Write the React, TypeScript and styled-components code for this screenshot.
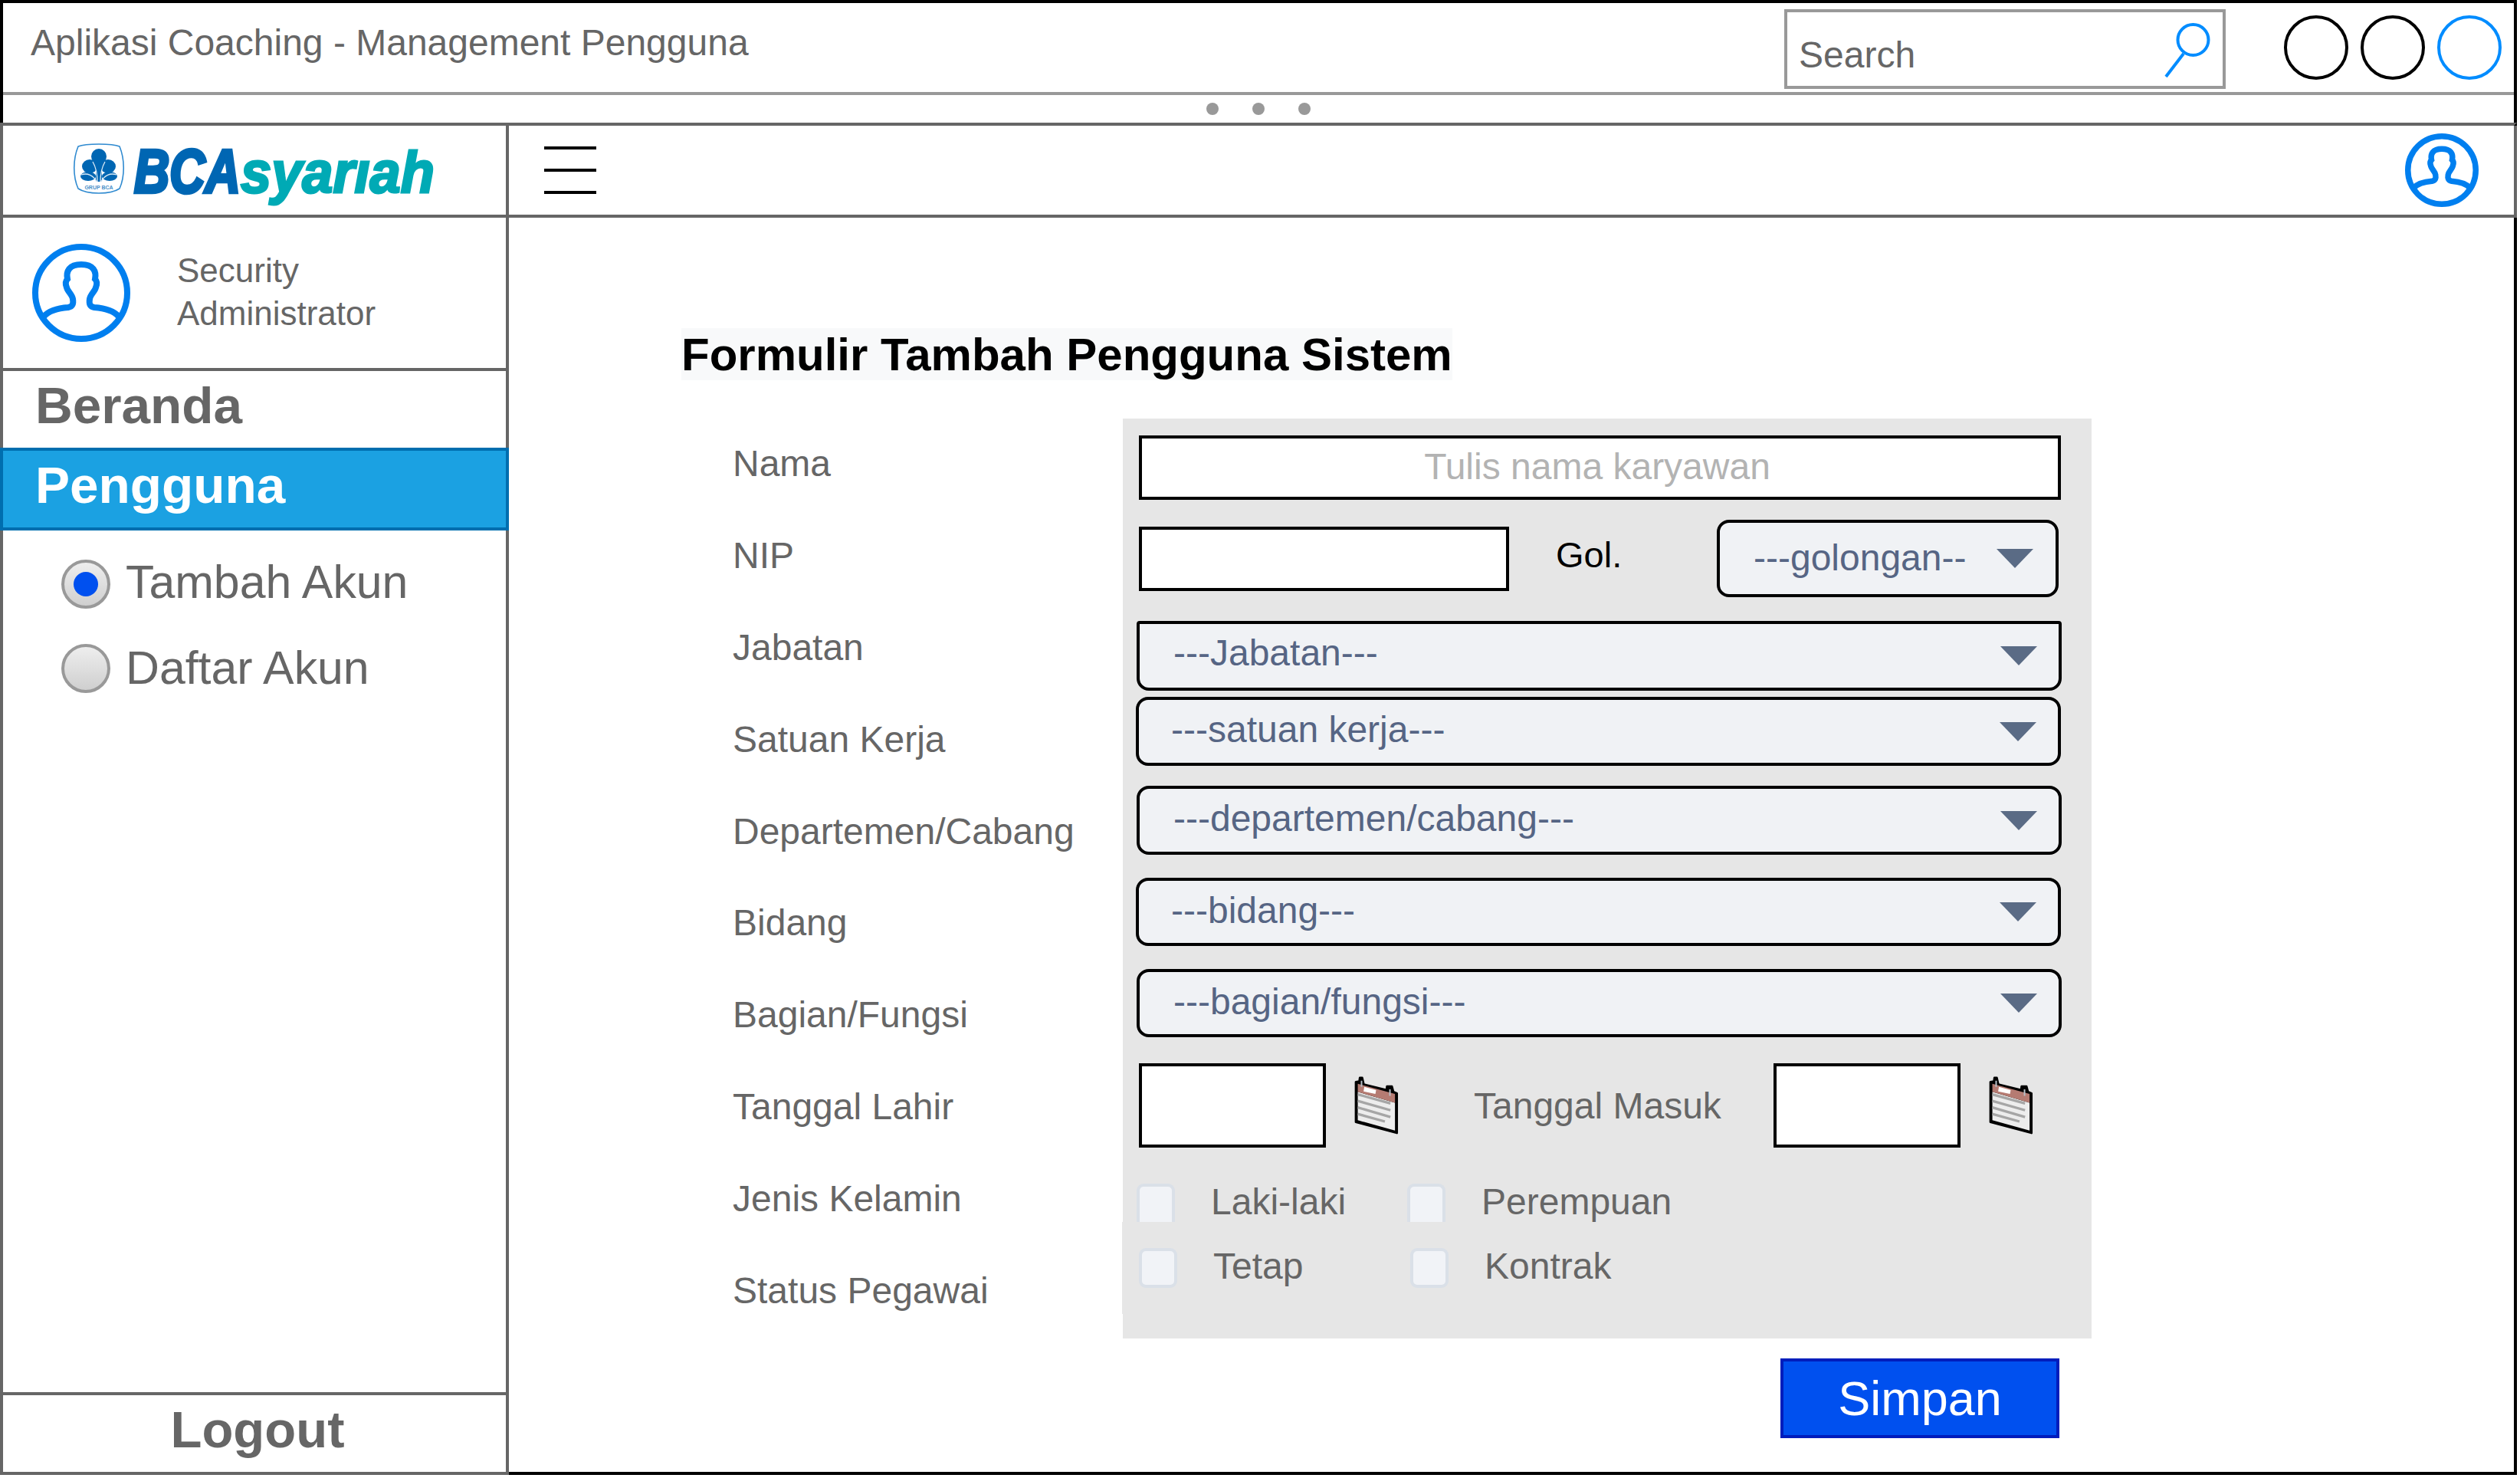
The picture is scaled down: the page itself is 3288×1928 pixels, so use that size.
import React from 'react';
import styled, { createGlobalStyle } from 'styled-components';

const Global = createGlobalStyle`
  html, body { margin: 0; padding: 0; background: #fff; }
  body { font-family: "Liberation Sans", Arial, sans-serif; color: #666; }
  * { box-sizing: border-box; }
`;

const Frame = styled.div`
  width: 3284px; height: 1924px; display: flex; flex-direction: column; background: #fff; overflow: hidden;
`;
const TitleBar = styled.header`
  height: 124px; flex: none; display: flex; align-items: flex-start;
  border-top: 4px solid #000; border-left: 4px solid #000; border-right: 4px solid #000;
  box-shadow: inset 0 -4px 0 #999;
`;
const AppTitle = styled.div`
  font-size: 48px; line-height: 56px; color: #666; margin: 24px 0 0 36px; flex: 1;
`;
const SearchBox = styled.div`
  width: 576px; height: 104px; margin: 8px 0 0 0; border: 4px solid #999; display: flex; align-items: flex-start;
  padding: 28px 0 0 15px; font-size: 48px; line-height: 56px; color: #666; position: relative;
`;
const SearchGlyph = styled.svg`
  position: absolute; left: 490px; top: 12px; width: 62px; height: 76px;
`;
const WindowButtons = styled.div`
  display: flex; gap: 16px; margin: 16px 16px 0 76px;
`;
const WindowButton = styled.span<{ $blue?: boolean }>`
  width: 84px; height: 84px; border-radius: 50%; border: 4px solid ${p => (p.$blue ? '#008CFF' : '#000')};
`;
const DotStrip = styled.div`
  height: 36px; flex: none; display: flex; justify-content: center; align-items: center; gap: 44px;
  border-left: 4px solid #000; border-right: 4px solid #000;
`;
const Dot = styled.span`
  width: 16px; height: 16px; border-radius: 50%; background: #999;
`;
const Shell = styled.div`
  flex: 1; min-height: 0; display: flex; flex-direction: column;
  border-top: 4px solid #666; border-left: 4px solid #666; border-right: 4px solid #000; border-bottom: 4px solid #000;
`;
const HeaderRow = styled.div`
  height: 120px; flex: none; display: flex; border-bottom: 4px solid #666; box-shadow: 4px 0 0 #666;
`;
const LogoCell = styled.div`
  width: 660px; flex: none; border-right: 4px solid #666; padding: 20px 0 0 88px;
`;
const LogoSvg = styled.svg`
  width: 480px; height: 92px; display: block; overflow: visible;
`;
const HeaderBar = styled.div`
  flex: 1; display: flex; align-items: center; justify-content: space-between; padding: 0 46px 0 46px;
`;
const Hamburger = styled.div`
  width: 68px; display: flex; flex-direction: column; gap: 25px;
`;
const HamburgerLine = styled.span`
  height: 4px; background: #000;
`;
const UserGlyph = styled.svg<{ $size: number }>`
  width: ${p => p.$size}px; height: ${p => p.$size}px; flex: none; display: block;
`;
const Body = styled.div`
  flex: 1; min-height: 0; display: flex;
`;
const Sidebar = styled.aside`
  width: 656px; flex: none; display: flex; flex-direction: column; box-shadow: 4px 0 0 #666;
`;
const UserBlock = styled.div`
  height: 200px; flex: none; display: flex; align-items: flex-start; border-bottom: 4px solid #666; padding: 34px 0 0 38px;
`;
const UserName = styled.div`
  margin: 7px 0 0 61px; font-size: 44px; line-height: 56px; color: #666;
`;
const NavItem = styled.div`
  height: 100px; flex: none; padding: 6px 0 0 42px; font-size: 67.5px; line-height: 78px; font-weight: 700; color: #666;
`;
const NavActive = styled.div`
  height: 108px; flex: none; margin: 0 -4px; padding: 6px 0 0 42px; background: #1BA1E2; border: 4px solid #006EAF;
  font-size: 67.5px; line-height: 78px; font-weight: 700; color: #fff;
`;
const RadioList = styled.div`
  display: flex; flex-direction: column; gap: 46px; padding: 38px 0 0 76px; flex: 1;
`;
const RadioRow = styled.div`
  display: flex; align-items: center; gap: 20px; height: 64px; font-size: 60.8px; color: #666;
`;
const RadioMark = styled.span`
  width: 64px; height: 64px; border-radius: 50%; border: 4px solid #999; display: flex; align-items: center; justify-content: center;
  background: linear-gradient(#eeeeee, #cfcfcf); flex: none;
`;
const RadioDot = styled.span`
  width: 32px; height: 32px; border-radius: 50%; background: #0050EF;
`;
const Lifted = styled.span<{ $lift: number; $nudge?: number }>`
  display: block; margin-bottom: ${p => p.$lift * 2}px; margin-right: ${p => p.$nudge ?? 0}px;
`;
const LogoutRow = styled.div`
  height: 104px; flex: none; border-top: 4px solid #666; text-align: center; padding-left: 8px;
  font-size: 67px; line-height: 90px; font-weight: 700; color: #666; box-shadow: -4px 4px 0 #666, 4px 4px 0 #666;
`;
const Content = styled.main`
  flex: 1; min-width: 0; display: flex; flex-direction: column; padding: 144px 0 0 229px;
`;
const Heading = styled.h1`
  margin: 0; align-self: flex-start; background: #F8F9FA; padding-top: 2px; font-size: 60px; line-height: 66px; font-weight: 700; color: #000;
`;
const FormSplit = styled.div`
  display: flex; margin-top: 50px; height: 1200px;
`;
const LabelColumn = styled.div`
  width: 576px; flex: none; padding: 31px 0 0 67px; display: flex; flex-direction: column;
`;
const FieldLabel = styled.div`
  height: 119.9px; flex: none; font-size: 48px; line-height: 56px; color: #666;
`;
const Panel = styled.div`
  width: 1264px; height: 1200px; background: #E6E6E6; padding: 22px 0 0 21px; display: flex; flex-direction: column; position: relative;
  &::before {
    content: ""; position: absolute; left: -1px; top: 1048px; width: 1px; height: 120px; background: #E6E6E6;
  }
`;
const TextInput = styled.div<{ $w: number; $h: number }>`
  width: ${p => p.$w}px; height: ${p => p.$h}px; flex: none; background: #fff; border: 4px solid #000;
  display: flex; align-items: center; justify-content: center; font-size: 48px; color: #B3B3B3;
`;
const InlineRow = styled.div<{ $top: number; $left?: number }>`
  display: flex; align-items: center; margin-top: ${p => p.$top}px; margin-left: ${p => p.$left ?? 0}px;
`;
const SelectBox = styled.div<{ $w: number; $h: number; $top?: number; $left?: number; $pad: number; $arrow: number }>`
  width: ${p => p.$w}px; height: ${p => p.$h}px; flex: none; margin-top: ${p => p.$top ?? 0}px; margin-left: ${p => p.$left ?? 0}px;
  background: #F0F2F5; border: 4px solid #000; border-radius: 16px; display: flex; align-items: center; justify-content: space-between;
  padding: 0 ${p => p.$arrow}px 0 ${p => p.$pad}px; font-size: 48px; color: #566584;
`;
const SelectSquareTop = styled(SelectBox)`
  border-top-left-radius: 4px; border-top-right-radius: 4px;
`;
const Caret = styled.span`
  width: 0; height: 0; border-left: 24px solid transparent; border-right: 24px solid transparent; border-top: 25px solid #5A6B85;
`;
const GolLabel = styled.div`
  font-size: 47px; color: #000; margin: -10px 0 0 61px; width: 210px; flex: none;
`;
const CalGlyph = styled.svg`
  width: 60px; height: 78px; flex: none; margin-left: 36px; display: block;
`;
const MasukLabel = styled.div`
  width: 391px; flex: none; margin-left: 97px; font-size: 48px; color: #666;
`;
const CheckItem = styled.div<{ $w: number }>`
  width: ${p => p.$w}px; flex: none; display: flex; align-items: center; gap: 47px; font-size: 48px; line-height: 40px; color: #666;
`;
const CheckBox = styled.span<{ $clipped?: boolean; $h: number }>`
  width: 50px; height: ${p => p.$h}px; flex: none; background: #F1F3F7; border: 4px solid #DAE0E8; border-radius: 9px;
  ${p => p.$clipped && 'border-bottom: none; border-bottom-left-radius: 0; border-bottom-right-radius: 0;'}
`;
const SubmitRow = styled.div`
  display: flex; margin: 26px 0 0 1434px;
`;
const SubmitButton = styled.div`
  width: 364px; height: 104px; flex: none; background: #0050EF; border: 4px solid #001DBC; color: #fff; font-size: 63px;
  display: flex; align-items: center; justify-content: center;
`;

const UserIcon = ({ size, stroke }: { size: number; stroke: number }) => (
  <UserGlyph $size={size} viewBox="0 0 128 128" fill="none" stroke="#007FEF" strokeWidth={stroke}>
    <circle cx="64" cy="64" r={64 - stroke / 2} />
    <path d="M15 95C22 87 33 84 47 83C53 82 54 78 53 72C52 66 46 62 45 57C43 52 44 48 46 46C44 36 48 27 64 27C80 27 84 36 82 46C84 48 85 52 83 57C82 62 76 66 75 72C74 78 75 82 81 83C95 84 106 87 113 95" />
  </UserGlyph>
);

const CalendarIcon = () => (
  <CalGlyph viewBox="75 68 183 236">
    <path d="M84 92L98 90L100 76L110 76L116 102L206 124L208 110L228 110L234 132L248 138L248 296L84 252Z" fill="#000" stroke="#000" strokeWidth="8" strokeLinejoin="round" />
    <path d="M92 132L240 175L240 286L92 245Z" fill="#EDEDED" />
    <path d="M92 100L240 140L240 175L92 132Z" fill="#B57B72" />
    <path d="M118 112L165 125L162 140L115 130Z" fill="#fff" />
    <path d="M92 142L222 178M92 168L222 205M92 194L222 232M92 220L200 250" stroke="#A6A6A6" strokeWidth="10" />
    <path d="M107 88V112M220 122V148" stroke="#B8C0C8" strokeWidth="6" />
  </CalGlyph>
);

const Logo = () => (
  <LogoSvg viewBox="0 0 480 92">
    <path d="M10 7C20 3 54 3 64 7C71 24 71 46 64 62C52 70 22 70 10 62C3 46 3 24 10 7Z" fill="#fff" stroke="#2F8AD0" strokeWidth="1.6" />
    <g fill="#0066B3">
      <circle cx="37" cy="20" r="10" />
      <ellipse cx="25" cy="33" rx="10" ry="9" />
      <ellipse cx="49" cy="33" rx="10" ry="9" />
      <ellipse cx="23" cy="46" rx="10" ry="6" />
      <ellipse cx="51" cy="46" rx="10" ry="6" />
      <path d="M33 26H41V53H33Z" />
    </g>
    <path d="M35 53C35 42 33 34 29 27M39 53C39 42 41 34 45 27M34 53C30 45 22 41 14 44M40 53C44 45 52 41 60 44" fill="none" stroke="#DCEBF6" strokeWidth="1.3" />
    <text x="37" y="63" fontSize="7" fontWeight="700" fill="#4A90C8" textAnchor="middle" fontFamily="Liberation Sans, sans-serif">GRUP BCA</text>
    <g transform="translate(83 67) scale(0.8 1)">
      <text fontFamily="Liberation Sans, sans-serif" fontSize="80" fontWeight="700" fontStyle="italic" fill="#0066B3" stroke="#0066B3" strokeWidth="4.5">BCA</text>
    </g>
    <g transform="translate(222 67) scale(0.95 1)">
      <text fontFamily="Liberation Sans, sans-serif" fontSize="76" fontWeight="700" fontStyle="italic" fill="#00AAB5" stroke="#00AAB5" strokeWidth="3">syarıah</text>
    </g>
  </LogoSvg>
);

const labels = ['Nama', 'NIP', 'Jabatan', 'Satuan Kerja', 'Departemen/Cabang', 'Bidang', 'Bagian/Fungsi', 'Tanggal Lahir', 'Jenis Kelamin', 'Status Pegawai'];

export default function App() {
  return (
    <Frame>
      <Global />
      <TitleBar>
        <AppTitle>Aplikasi Coaching - Management Pengguna</AppTitle>
        <SearchBox>
          Search
          <SearchGlyph viewBox="0 0 62 76" fill="none" stroke="#008CFF">
            <circle cx="39.5" cy="24" r="20" strokeWidth="4" />
            <path d="M27 42L4 72" strokeWidth="4" />
          </SearchGlyph>
        </SearchBox>
        <WindowButtons>
          <WindowButton />
          <WindowButton />
          <WindowButton $blue />
        </WindowButtons>
      </TitleBar>
      <DotStrip>
        <Dot /><Dot /><Dot />
      </DotStrip>
      <Shell>
        <HeaderRow>
          <LogoCell><Logo /></LogoCell>
          <HeaderBar>
            <Hamburger><HamburgerLine /><HamburgerLine /><HamburgerLine /></Hamburger>
            <UserIcon size={96} stroke={10} />
          </HeaderBar>
        </HeaderRow>
        <Body>
          <Sidebar>
            <UserBlock>
              <UserIcon size={128} stroke={8} />
              <UserName>Security<br />Administrator</UserName>
            </UserBlock>
            <NavItem>Beranda</NavItem>
            <NavActive>Pengguna</NavActive>
            <RadioList>
              <RadioRow><RadioMark><RadioDot /></RadioMark><Lifted $lift={3}>Tambah Akun</Lifted></RadioRow>
              <RadioRow><RadioMark /><Lifted $lift={1.5}>Daftar Akun</Lifted></RadioRow>
            </RadioList>
            <LogoutRow>Logout</LogoutRow>
          </Sidebar>
          <Content>
            <Heading>Formulir Tambah Pengguna Sistem</Heading>
            <FormSplit>
              <LabelColumn>
                {labels.map(l => <FieldLabel key={l}>{l}</FieldLabel>)}
              </LabelColumn>
              <Panel>
                <TextInput $w={1203} $h={84}><Lifted $lift={2} $nudge={7}>Tulis nama karyawan</Lifted></TextInput>
                <InlineRow $top={26}>
                  <TextInput $w={483} $h={84} />
                  <GolLabel>Gol.</GolLabel>
                  <SelectBox $w={446} $h={101} $pad={44} $arrow={29}><Lifted $lift={1}>---golongan--</Lifted><Caret /></SelectBox>
                </InlineRow>
                <SelectSquareTop $w={1207} $h={91} $top={31} $left={-3} $pad={44} $arrow={28}><Lifted $lift={4}>---Jabatan---</Lifted><Caret /></SelectSquareTop>
                <SelectBox $w={1207} $h={90} $top={8} $left={-4} $pad={42} $arrow={28}><Lifted $lift={3}>---satuan kerja---</Lifted><Caret /></SelectBox>
                <SelectBox $w={1207} $h={90} $top={26} $left={-3} $pad={44} $arrow={28}><Lifted $lift={3}>---departemen/cabang---</Lifted><Caret /></SelectBox>
                <SelectBox $w={1207} $h={89} $top={30} $left={-4} $pad={42} $arrow={28}><Lifted $lift={2.5}>---bidang---</Lifted><Caret /></SelectBox>
                <SelectBox $w={1207} $h={89} $top={30} $left={-3} $pad={44} $arrow={28}><Lifted $lift={2.5}>---bagian/fungsi---</Lifted><Caret /></SelectBox>
                <InlineRow $top={34}>
                  <TextInput $w={244} $h={110} />
                  <CalendarIcon />
                  <MasukLabel>Tanggal Masuk</MasukLabel>
                  <TextInput $w={244} $h={110} />
                  <CalendarIcon />
                </InlineRow>
                <InlineRow $top={47} $left={-3}>
                  <CheckItem $w={353}><CheckBox $clipped $h={50} /><Lifted $lift={1.5}>Laki-laki</Lifted></CheckItem>
                  <CheckItem $w={300}><CheckBox $clipped $h={50} /><Lifted $lift={1.5}>Perempuan</Lifted></CheckItem>
                </InlineRow>
                <InlineRow $top={34}>
                  <CheckItem $w={354}><CheckBox $h={52} /><Lifted $lift={2.5}>Tetap</Lifted></CheckItem>
                  <CheckItem $w={300}><CheckBox $h={52} /><Lifted $lift={2.5}>Kontrak</Lifted></CheckItem>
                </InlineRow>
              </Panel>
            </FormSplit>
            <SubmitRow><SubmitButton>Simpan</SubmitButton></SubmitRow>
          </Content>
        </Body>
      </Shell>
    </Frame>
  );
}
